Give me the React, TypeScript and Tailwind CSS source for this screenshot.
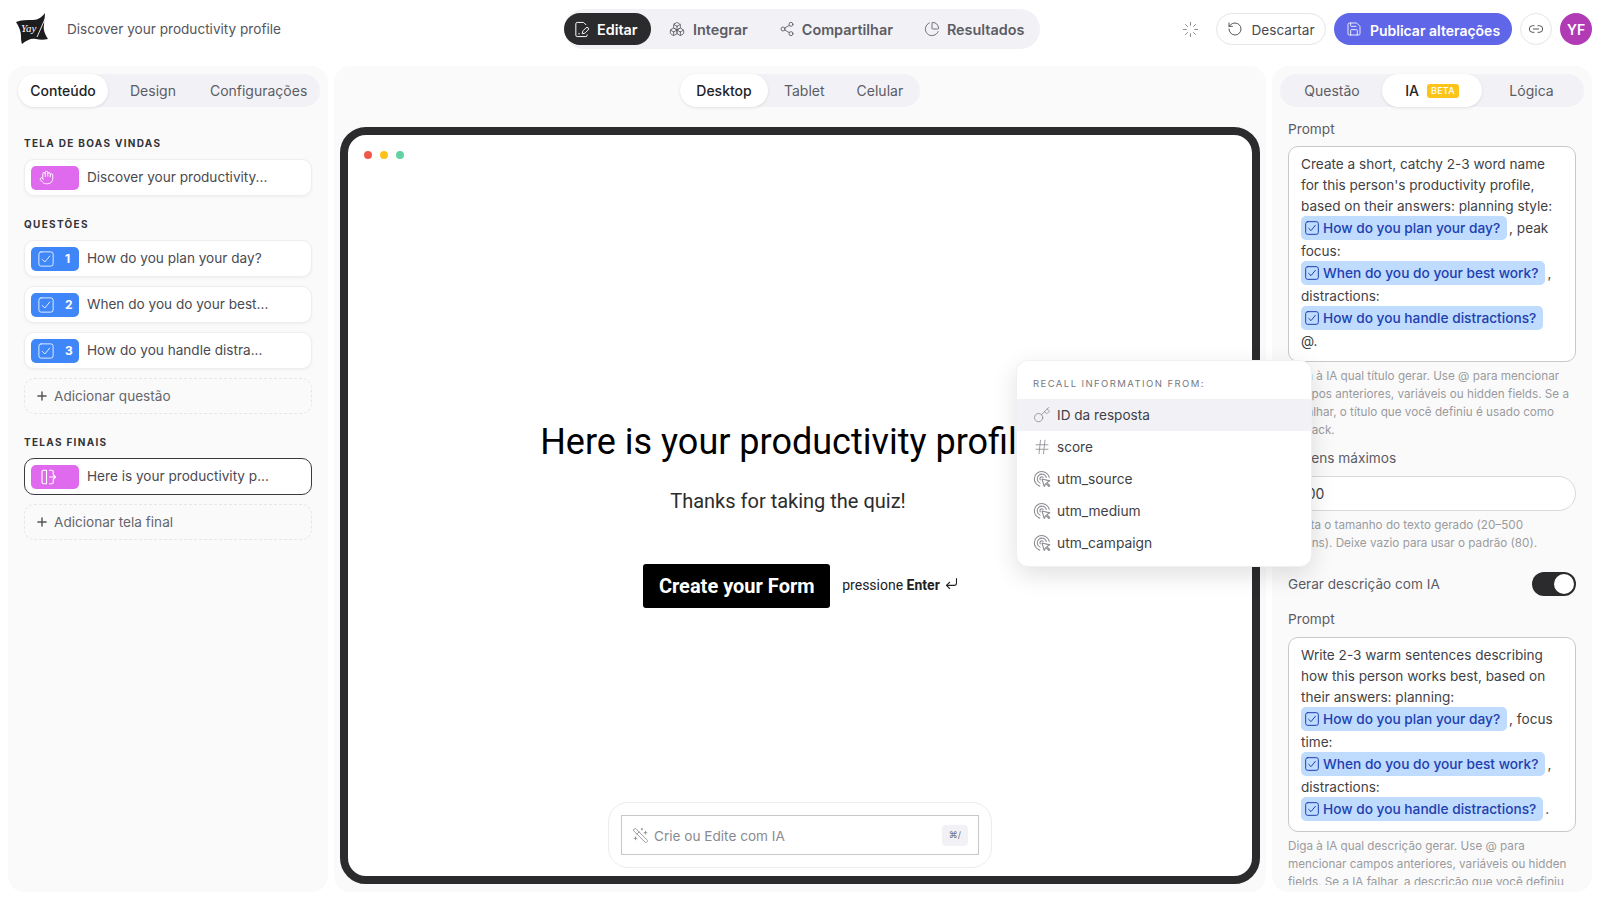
import {
  Boxes,
  ChartPie,
  CornerDownLeft,
  FilePenLine,
  Hand,
  Hash,
  Key,
  Link2,
  Loader,
  Plus,
  RotateCcw,
  Save,
  Share2,
  WandSparkles,
} from "lucide-react";
import type { ReactNode } from "react";

function Logo() {
  return (
    <svg width="32" height="32" viewBox="0 0 32 32" className="shrink-0">
      <path
        d="M29 0C26 4 22 7 17 7C11 7 5 7 0 9C3 14 5 18 5 23C5 26 5 28 6 31C11 27 15 25 20 26C24 27 28 27 32 26C29 21 27 17 28 12C28 8 29 4 29 0Z"
        fill="#1c1c1e"
      />
      <text x="5" y="19" fill="#fff" fontSize="11" fontStyle="italic" fontFamily="Liberation Serif, serif">
        Yay
      </text>
      <path d="M29 6L21 24" stroke="#fff" strokeWidth="0.9" />
    </svg>
  );
}

function CheckBox(props: { size: number; color: string; width: number; className?: string }) {
  return (
    <svg width={props.size} height={props.size} viewBox="0 0 24 24" fill="none" stroke={props.color} strokeWidth={props.width} strokeLinecap="round" strokeLinejoin="round" className={`shrink-0 ${props.className ?? ""}`}>
      <rect x="2.5" y="2.5" width="19" height="19" rx="3" />
      <path d="M7 12.5l3.5 3.5L17 8" />
    </svg>
  );
}

function ExitIcon() {
  return (
    <svg width="18" height="18" viewBox="0 0 24 24" fill="none" stroke="#fff" strokeWidth="1.5" strokeLinecap="round" strokeLinejoin="round">
      <path d="M10 3H6a2 2 0 0 0-2 2v14a2 2 0 0 0 2 2h4z" />
      <path d="M14 3h3a2 2 0 0 1 2 2v3M19 16v3a2 2 0 0 1-2 2h-3" />
      <path d="M14 12h8M19 9l3 3-3 3" />
    </svg>
  );
}

function ClickIcon() {
  return (
    <svg width="18" height="18" viewBox="0 0 24 24" fill="none" stroke="#8b8b92" strokeWidth="1.4" strokeLinecap="round" strokeLinejoin="round">
      <path d="M9 21.5A10 10 0 1 1 21.6 10" />
      <path d="M9.5 17.5A6.2 6.2 0 1 1 17.8 10" />
      <path d="M9.8 13.2A2.4 2.4 0 1 1 13.6 10" />
      <path d="M12 12l3 10 2-4 4.5 4 1-1-4-4.5 4-2z" fill="#fff" />
    </svg>
  );
}

function Badge(props: { color: string; icon: ReactNode; num?: number }) {
  return (
    <div className={`flex h-6 w-12 shrink-0 items-center rounded-[5px] pl-2 ${props.color}`}>
      {props.icon}
      {props.num && <span className="ml-[10px] text-xs font-bold text-white">{props.num}</span>}
    </div>
  );
}

function Card(props: { badge: ReactNode; label: string; active?: boolean }) {
  return (
    <div
      className={`flex h-[37px] items-center gap-2 rounded-[10px] border bg-white pl-[6px] text-[13.6px] text-[#4a4a50] ${
        props.active ? "border-[#3a3a3f]" : "border-[#eeeeee] shadow-[0_1px_3px_rgba(0,0,0,0.05)]"
      }`}
    >
      {props.badge}
      <span>{props.label}</span>
    </div>
  );
}

function AddRow(props: { label: string }) {
  return (
    <div className="flex h-[36px] items-center gap-[5px] rounded-[10px] border-[1.5px] border-dashed border-[#e6e6e8] pl-[10px] text-[13.6px] text-[#66666c]">
      <Plus size={14} strokeWidth={2.5} className="text-[#55555a]" />
      {props.label}
    </div>
  );
}

function SectionLabel(props: { children: ReactNode; className: string }) {
  return (
    <div className={`text-[10px] leading-[13px] font-bold tracking-[0.13em] text-[#333338] ${props.className}`}>
      {props.children}
    </div>
  );
}

function Chip(props: { label: string }) {
  return (
    <span className="mr-[2px] inline-flex h-6 -translate-y-px items-center gap-[3px] rounded-[5px] bg-[#bfdbfe] pr-[7px] pl-[3px] align-middle text-[13.7px] font-medium text-[#1e40af]">
      <CheckBox size={16} color="#1e40af" width={1.5} />
      {props.label}
    </span>
  );
}

function PromptBox(props: { children: ReactNode; className: string }) {
  return (
    <div className={`rounded-[10px] border border-[#c9c9cd] bg-white px-[12px] pt-[7px] text-[13.6px] leading-[21px] text-[#3f3f45] ${props.className}`}>
      {props.children}
    </div>
  );
}

function NavLabel(props: { children: ReactNode }) {
  return <span className="mt-[2px]">{props.children}</span>;
}

const tabClass = "flex h-[33px] items-center justify-center rounded-full text-[14px]";
const activeTab = "bg-white font-medium text-[#222226] shadow-[0_1px_3px_rgba(0,0,0,0.1)]";
const navItem = "flex items-center text-[14.4px] font-semibold text-[#5c5c64]";
const hintClass = "text-[11.7px] leading-[18px] text-[#9a9aa0]";
const fieldLabel = "text-[13.7px] leading-5 text-[#5c5c64]";

const questionBadge = (num: number) => (
  <Badge color="bg-[#3f86f8]" num={num} icon={<CheckBox size={18} width={1.1} color="#fff" className="-ml-[2px]" />} />
);

export default function App() {
  return (
    <div className="relative flex h-[900px] w-[1600px] flex-col overflow-hidden bg-white font-['Inter',sans-serif]">
      {/* header */}
      <header className="flex h-[66px] shrink-0 items-start pt-[9px]">
        <div className="flex h-10 w-[564px] items-center pl-4">
          <Logo />
          <span className="ml-[19px] text-[13.6px] text-[#55555b]">Discover your productivity profile</span>
        </div>
        <nav className="flex h-10 w-[476px] items-center rounded-full bg-[#f2f2f6]">
          <div className="flex h-8 w-[87px] items-center gap-[7px] rounded-full bg-[#2b2b2e] pl-[9px] text-[14.4px] font-semibold text-white">
            <FilePenLine size={17} strokeWidth={1.4} />
            <NavLabel>Editar</NavLabel>
          </div>
          <div className={`${navItem} ml-[18px] gap-2`}>
            <Boxes size={16} strokeWidth={1.3} />
            <NavLabel>Integrar</NavLabel>
          </div>
          <div className={`${navItem} ml-[31px] gap-[7px]`}>
            <Share2 size={16} strokeWidth={1.3} />
            <NavLabel>Compartilhar</NavLabel>
          </div>
          <div className={`${navItem} ml-[31px] gap-[7px]`}>
            <ChartPie size={16} strokeWidth={1.3} />
            <NavLabel>Resultados</NavLabel>
          </div>
        </nav>
        <div className="flex h-10 flex-1 items-center justify-end pr-2">
          <Loader size={17} strokeWidth={1.2} className="mr-[17px] text-[#77777d]" />
          <div className="flex h-8 w-[110px] items-center justify-center gap-2 rounded-full border border-[#e6e6e8] text-[13.6px] text-[#4a4a50]">
            <RotateCcw size={16} strokeWidth={1.4} />
            <NavLabel>Descartar</NavLabel>
          </div>
          <div className="ml-2 flex h-8 w-[178px] items-center justify-center gap-2 rounded-full bg-[#5f66e8] text-[14px] font-semibold text-white">
            <Save size={16} strokeWidth={1.3} />
            <NavLabel>Publicar alterações</NavLabel>
          </div>
          <div className="ml-2 flex h-8 w-8 items-center justify-center rounded-full border border-[#e6e6e8] text-[#55555b]">
            <Link2 size={16} strokeWidth={1.5} />
          </div>
          <div className="ml-2 flex h-8 w-8 items-center justify-center rounded-full bg-[#b03bb5] text-[14px] font-semibold text-white">
            YF
          </div>
        </div>
      </header>

      <main className="flex min-h-0 flex-1 gap-[6px] px-2 pb-2">
        {/* left */}
        <aside className="w-[320px] shrink-0 rounded-2xl bg-[#fafafa] pt-2">
          <div className="mr-2 ml-[10px] flex h-[33px] items-center rounded-full bg-[#f2f2f6] text-[#5c5c64]">
            <div className={`${tabClass} ${activeTab} w-[90px] shrink-0`}>Conteúdo</div>
            <div className={`${tabClass} ml-[22px]`}>Design</div>
            <div className={`${tabClass} ml-[34px]`}>Configurações</div>
          </div>
          <div className="px-4">
            <SectionLabel className="mt-[30px] mb-[9px]">TELA DE BOAS VINDAS</SectionLabel>
            <Card label="Discover your productivity..." badge={<Badge color="bg-[#e06aee]" icon={<Hand size={15} strokeWidth={1.5} color="#fff" />} />} />
            <SectionLabel className="mt-[22px] mb-[9px]">QUESTÕES</SectionLabel>
            <div className="flex flex-col gap-[9px]">
              <Card label="How do you plan your day?" badge={questionBadge(1)} />
              <Card label="When do you do your best..." badge={questionBadge(2)} />
              <Card label="How do you handle distra..." badge={questionBadge(3)} />
              <AddRow label="Adicionar questão" />
            </div>
            <SectionLabel className="mt-[22px] mb-[9px]">TELAS FINAIS</SectionLabel>
            <div className="flex flex-col gap-[9px]">
              <Card active label="Here is your productivity p..." badge={<Badge color="bg-[#e06aee]" icon={<ExitIcon />} />} />
              <AddRow label="Adicionar tela final" />
            </div>
          </div>
        </aside>

        {/* center */}
        <section className="flex min-w-0 flex-1 flex-col rounded-2xl bg-[#fafafa] px-[6px] pt-2 pb-2">
          <div className="mx-auto flex h-[33px] w-[240px] items-center rounded-full bg-[#f2f2f6] text-[#5c5c64]">
            <div className={`${tabClass} ${activeTab} w-[88px]`}>Desktop</div>
            <div className={`${tabClass} ml-[16px]`}>Tablet</div>
            <div className={`${tabClass} ml-[32px]`}>Celular</div>
          </div>
          <div className="mt-5 flex min-h-0 flex-1 flex-col rounded-[26px] border-8 border-[#2b2b2e] bg-white">
            <div className="flex gap-2 pt-4 pl-4">
              <span className="h-2 w-2 rounded-full bg-[#f0594a]" />
              <span className="h-2 w-2 rounded-full bg-[#fcc419]" />
              <span className="h-2 w-2 rounded-full bg-[#63d2a3]" />
            </div>
            <div className="flex flex-1 flex-col items-center font-['Roboto',sans-serif]">
              <h1 className="mt-[261px] mr-[24px] text-[36px] leading-[45px] font-normal text-black">Here is your productivity profile</h1>
              <p className="mt-[22px] mr-[24px] text-[20px] leading-[28px] text-[#2c2c2c]">Thanks for taking the quiz!</p>
              <div className="mt-[49px] ml-[2px] flex items-center">
                <div className="flex h-11 w-[187px] items-center justify-center rounded-[3px] bg-black text-[20px] font-bold text-white">
                  Create your Form
                </div>
                <span className="mb-[2px] ml-3 text-[14px] text-[#222]">
                  pressione <b>Enter</b>
                </span>
                <CornerDownLeft size={15} strokeWidth={1.7} className="mb-[5px] ml-[4px] text-[#222]" />
              </div>
            </div>
            <div className="mx-auto mb-2 w-[384px] rounded-[20px] border border-[#ececee] bg-white p-3">
              <div className="flex h-10 items-center border border-[#c9c9cd] px-[10px] font-['Inter',sans-serif] text-[13.6px] text-[#8a8a90]">
                <WandSparkles size={17} strokeWidth={1.2} className="mr-[5px] -scale-x-100" />
                <NavLabel>Crie ou Edite com IA</NavLabel>
                <span className="ml-auto flex h-[21px] w-[26px] items-center justify-center rounded-[4px] bg-[#f2f2f6] text-[9px] text-[#77777d]">⌘/</span>
              </div>
            </div>
          </div>
        </section>

        {/* right */}
        <aside className="flex w-[320px] shrink-0 flex-col rounded-2xl bg-[#fafafa] pt-2 pb-[7px]">
          <div className="mx-2 flex h-[33px] shrink-0 items-center rounded-full bg-[#f2f2f6] text-[#5c5c64]">
            <div className={`${tabClass} w-[102px] pl-[2px]`}>Questão</div>
            <div className={`${tabClass} ${activeTab} w-[100px] gap-2`}>
              IA
              <span className="rounded-[3px] bg-[#fcc419] px-[4px] py-[1px] text-[9px] leading-[12px] font-medium tracking-wide text-white">BETA</span>
            </div>
            <div className={`${tabClass} flex-1 pr-[3px]`}>Lógica</div>
          </div>
          <div className="min-h-0 flex-1 overflow-hidden px-4">
            <div className={`${fieldLabel} mt-[12px] mb-[7px]`}>Prompt</div>
            <PromptBox className="h-[216px]">
              Create a short, catchy 2-3 word name for this person's productivity profile, based on their answers: planning style: <Chip label="How do you plan your day?" />, peak focus: <Chip label="When do you do your best work?" />, distractions: <Chip label="How do you handle distractions?" /> @.
            </PromptBox>
            <p className={`${hintClass} mt-[5px]`}>
              Diga à IA qual título gerar. Use @ para mencionar campos anteriores, variáveis ou hidden fields. Se a IA falhar, o título que você definiu é usado como fallback.
            </p>
            <div className={`${fieldLabel} mt-[9px] mb-[8px]`}>Tokens máximos</div>
            <div className="flex h-[35px] items-center rounded-full border border-[#d9d9dc] bg-white pl-3 text-[14px] text-[#3f3f45]">100</div>
            <p className={`${hintClass} mt-[5px] pr-[20px]`}>
              Limita o tamanho do texto gerado (20–500 tokens). Deixe vazio para usar o padrão (80).
            </p>
            <div className="mt-[20px] flex items-center justify-between">
              <span className="text-[13.6px] text-[#5c5c64]">Gerar descrição com IA</span>
              <div className="flex h-6 w-11 items-center justify-end rounded-full bg-[#2b2b2e] pr-[2px]">
                <span className="h-5 w-5 rounded-full bg-white" />
              </div>
            </div>
            <div className={`${fieldLabel} mt-[13px] mb-[8px]`}>Prompt</div>
            <PromptBox className="h-[195px]">
              Write 2-3 warm sentences describing how this person works best, based on their answers: planning: <Chip label="How do you plan your day?" />, focus time: <Chip label="When do you do your best work?" />, distractions: <Chip label="How do you handle distractions?" />.
            </PromptBox>
            <p className={`${hintClass} mt-[5px] pr-[6px]`}>
              Diga à IA qual descrição gerar. Use @ para mencionar campos anteriores, variáveis ou hidden fields. Se a IA falhar, a descrição que você definiu é usada como fallback.
            </p>
          </div>
        </aside>
      </main>

      {/* recall popup */}
      <div className="absolute top-[360px] left-[1016px] w-[296px] rounded-xl border border-[#f0f0f2] bg-white pb-[7px] shadow-[0_8px_24px_rgba(0,0,0,0.12)]">
        <div className="px-4 pt-[16px] pb-[9px] text-[9.5px] leading-[13px] tracking-[0.15em] text-[#77777d]">RECALL INFORMATION FROM:</div>
        <div className="flex h-8 items-center gap-[6px] bg-[#f2f2f6] px-4 text-[13.6px] text-[#3f3f45]">
          <Key size={18} strokeWidth={1.1} className="text-[#8b8b92]" />
          ID da resposta
        </div>
        <div className="flex h-8 items-center gap-[6px] px-4 text-[13.6px] text-[#3f3f45]">
          <Hash size={18} strokeWidth={1.1} className="text-[#8b8b92]" />
          score
        </div>
        {["utm_source", "utm_medium", "utm_campaign"].map((name) => (
          <div key={name} className="flex h-8 items-center gap-[6px] px-4 text-[13.8px] text-[#3f3f45]">
            <ClickIcon />
            {name}
          </div>
        ))}
      </div>
    </div>
  );
}
